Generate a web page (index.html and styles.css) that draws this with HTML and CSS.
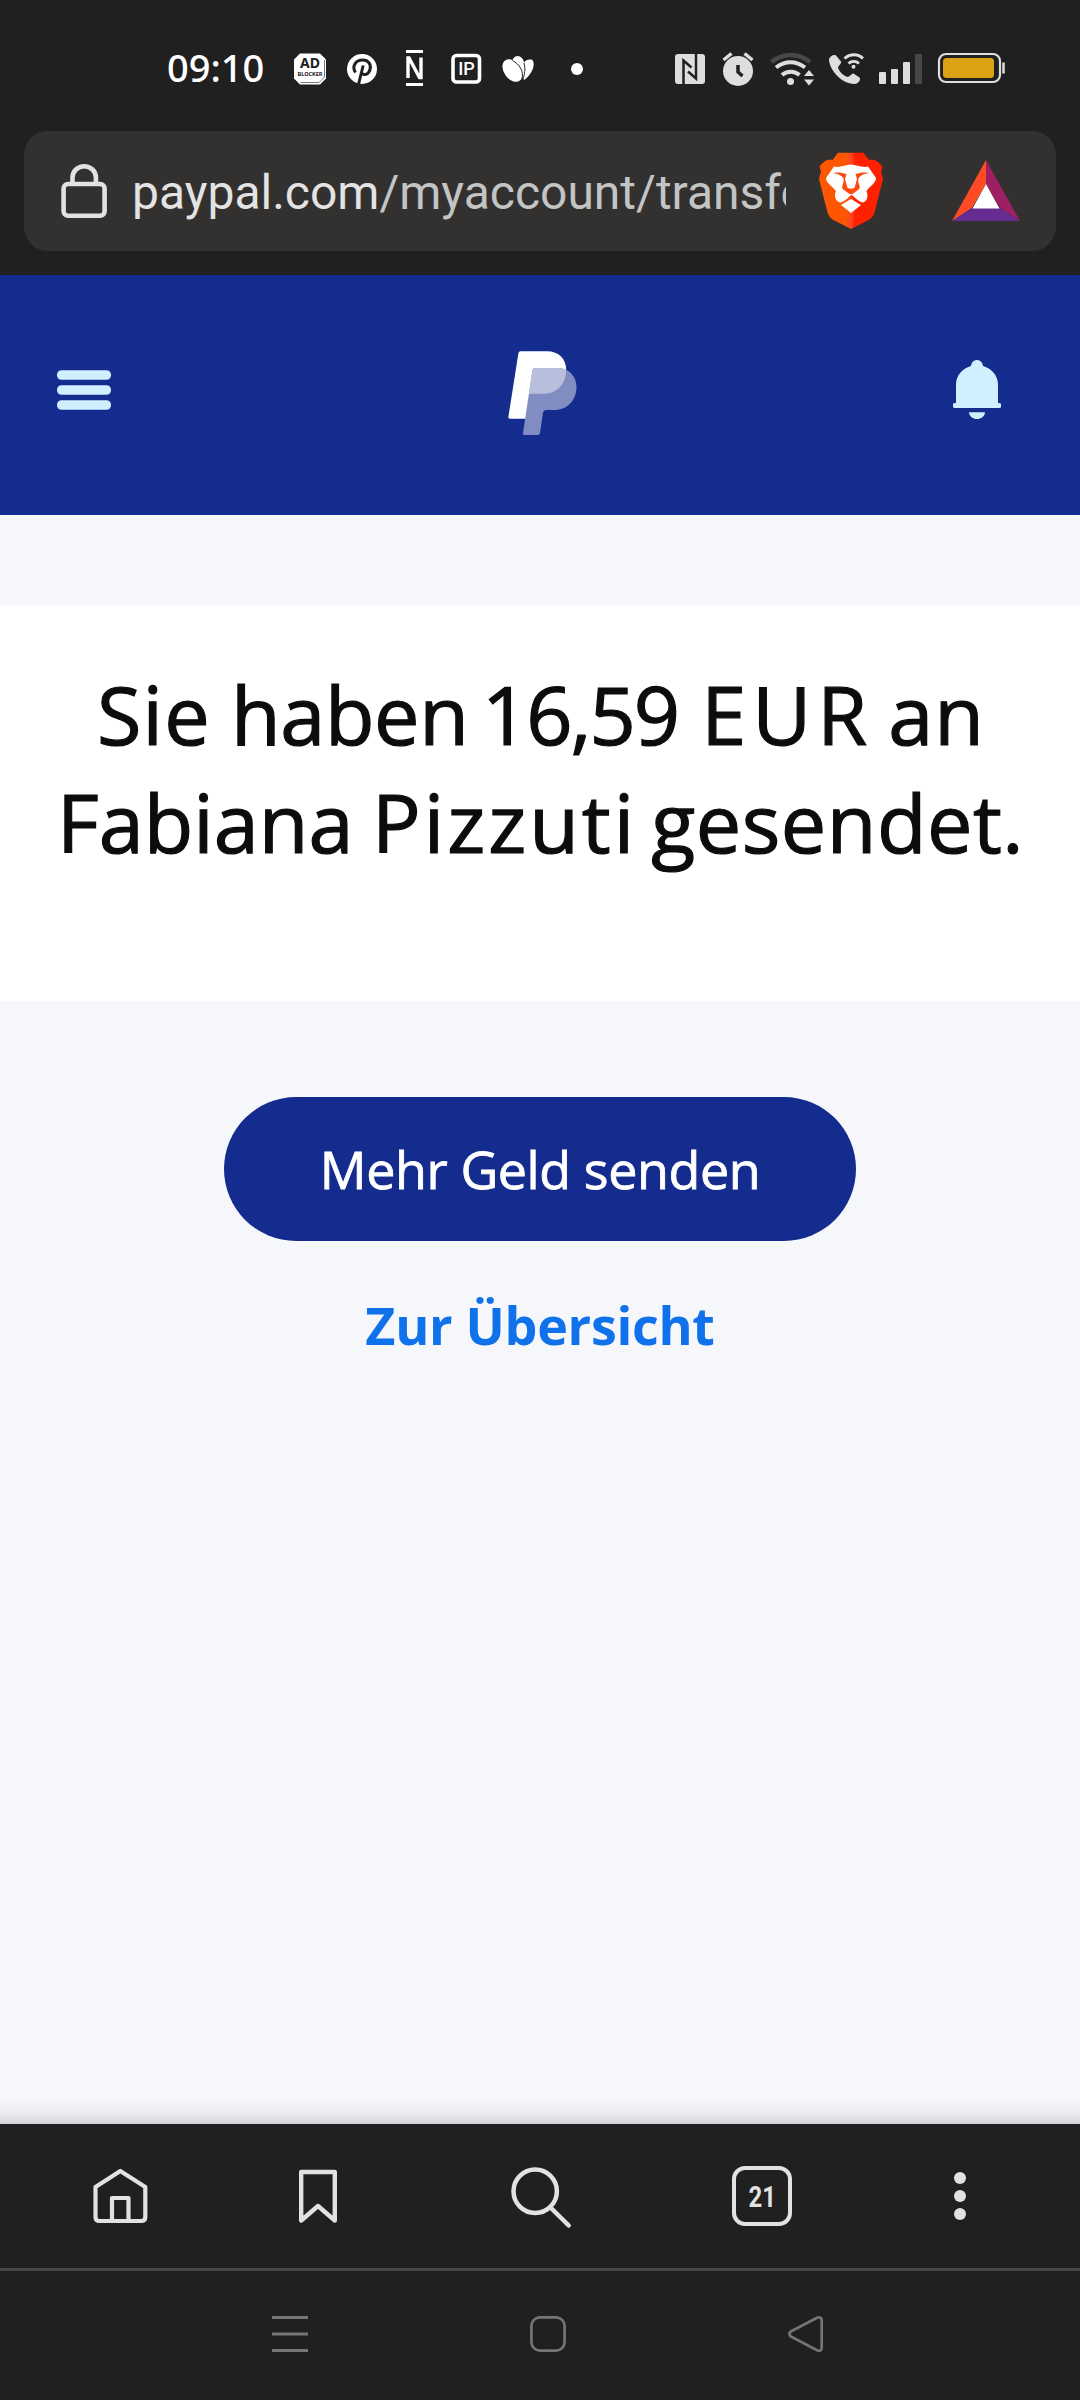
FILE: index.html
```html
<!DOCTYPE html>
<html lang="de">
<head>
<meta charset="utf-8">
<title>PayPal</title>
<link rel="stylesheet" href="styles.css">
</head>
<body>
<div class="screen">
  <div class="status">
    <span class="clock">09:10</span>
    <div class="status-left">
      <svg width="52" height="50" viewBox="284 44 52 50"><path d="M300 53.500h20l6 6v19l-6 6h-20l-6-6v-19z" fill="#fff"/><path d="M300.500 82.500h18.500l5.500-5.500V60" fill="none" stroke="#202020" stroke-width=".6"/><text x="310" y="68" class="ad-big">AD</text><text x="310" y="75.500" class="ad-small" textLength="25" lengthAdjust="spacingAndGlyphs">BLOCKER</text></svg>
      <svg width="52" height="50" viewBox="336 44 52 50"><circle cx="362" cy="69" r="15" fill="#fff"/><path d="M355.500 72.500c-4-6 0-12.500 7-12.500 6 0 9 4.500 7.500 9.500-1.500 5.500-7 6.500-8.500 3M363.200 65.500l-5 20" fill="none" stroke="#202020" stroke-width="3"/></svg>
      <svg width="52" height="50" viewBox="388 44 52 50"><path d="M406 50h17v3h-17zM406 83h17v3h-17z" fill="#fff"/><path d="M408 78V58h1l10.500 19.500h1.500V57.500" fill="none" stroke="#fff" stroke-width="3.400"/></svg>
      <svg width="52" height="50" viewBox="440 44 52 50"><rect x="453" y="55.500" width="26.500" height="26.500" rx="3.500" fill="none" stroke="#fff" stroke-width="3.600"/><text x="466.500" y="75" class="ip">IP</text></svg>
      <svg width="52" height="50" viewBox="492 44 52 50" fill="#fff"><path d="M512.500 60c1-2.500 3-4 5-4 3.500 0 6 3 6.500 6.500 2-2.500 4.500-3.500 8.500-2.500 3.500 5-1 15-8.500 20z"/><ellipse cx="512.500" cy="70.500" rx="8.500" ry="12.500" transform="rotate(-36 512.500 70.500)"/><path d="M512.500 60.500c7 4 11.500 10 9.500 19M524 63c1.500 6 1 11-1.500 17" fill="none" stroke="#202020" stroke-width="1"/></svg>
      <i class="dot"></i>
    </div>
    <div class="status-right">
      <svg width="48" height="50" viewBox="666 44 48 50"><rect x="675" y="54" width="30" height="30" rx="3" fill="#dedede"/><path d="M683.500 84V60.500l8 7M696 54v24.500l-8-7" fill="none" stroke="#202020" stroke-width="2.500"/></svg>
      <svg width="48" height="50" viewBox="714 44 48 50"><circle cx="738" cy="71" r="15" fill="#dedede"/><path d="M723.500 60l8-6.500M752.500 60l-8-6.500" stroke="#dedede" stroke-width="3.500"/><path d="M738 65v7l4.500 4" fill="none" stroke="#202020" stroke-width="3.500"/></svg>
      <svg width="60" height="50" viewBox="762 44 60 50" fill="none" stroke="#dedede" stroke-width="4"><path d="M771.500 62c11-9.500 27.500-9.500 38.500 0" stroke="#484848" stroke-width="4.500"/><path d="M776 67.500c9-7 20-7 29 0M782 75c5-4.500 12.500-4.500 17.500 0"/><circle cx="790.500" cy="81.500" r="3.500" fill="#dedede" stroke="none"/><path d="M804 76l5-6 5 6zM804 79.500l5 6 5-6z" fill="#dedede" stroke="none"/></svg>
      <svg width="48" height="50" viewBox="822 44 48 50"><path d="M829 59c1-3 5-5 7-3.500l5 6c.8 1.800-2.500 4-3 6 1.500 4.500 5 8 9.500 9.500 2 0 3.500-3 6-3.500l6 4c1.500 2-.5 6-5 6.500C841 84 829 69 829 59z" fill="#dedede"/><path d="M844.500 58.500c5.500-5 13.500-5 18.500 0M848.500 63.500c3-2.800 7.500-2.800 10.500 0" fill="none" stroke="#dedede" stroke-width="2.800"/><circle cx="853.500" cy="66.800" r="2" fill="#dedede"/></svg>
      <svg width="60" height="50" viewBox="870 44 60 50" fill="#dedede"><rect x="879" y="72" width="7" height="12" rx="1"/><rect x="891" y="69" width="7" height="15" rx="1"/><rect x="903" y="62" width="7" height="22" rx="1"/><rect x="915" y="54" width="7" height="30" rx="1" fill="#484848"/></svg>
      <svg width="80" height="50" viewBox="930 44 80 50"><rect x="939" y="54" width="61" height="28" rx="7" fill="none" stroke="#dedede" stroke-width="2.200"/><rect x="943" y="58" width="51" height="20" rx="3.500" fill="#dba213"/><path d="M1003.500 62.500v11" stroke="#dedede" stroke-width="2.500"/></svg>
    </div>
  </div>

  <div class="urlbar">
    <svg width="54" height="64" viewBox="57 159 54 64" fill="none" stroke="#e2e2e2" stroke-width="4.600"><rect x="63.600" y="184" width="41" height="31.700" rx="4.500"/><path d="M72.500 184v-6.500a11.700 11.300 0 0 1 23.400 0v6.500"/></svg>
    <div class="url">paypal.com<span class="path">/myaccount/transfer</span></div>
    <svg class="brave" width="66" height="78" viewBox="818 152 66 78">
      <defs><linearGradient id="mane"><stop offset=".42" stop-color="#ff5601"/><stop offset=".5" stop-color="#ff4524"/><stop offset=".57" stop-color="#ff2000"/></linearGradient></defs>
      <path d="M838 152.700h25.500l5.500 7.300c5-1 8 0 13.500 6.500l-1.500 5 2 7.500-8.500 33.500c-1 3-2.500 5-5 7L851 229l-18.500-9.500c-2.500-2-4-4-5-7l-8.500-33.500 2-7.500-1.500-5c5-6.500 8.500-7.500 13-6.500z" fill="url(#mane)"/>
      <path d="M834 166.500c6 1.500 11-1.500 17-2 6 .5 11 3.500 17 2l8 11.500c0 5-6 8-9.500 13 2 5 1 10-3.500 11.500-4-.5-7-4-11.500-8-4 4-7.500 7.500-11.500 8-4.500-1.500-6.500-6.500-4-11.500-4-5-10-8-10-13zM851 199l10 6-10 8-10-8z" fill="#fff"/>
      <path d="M833.500 173c5-1 9 0 13 1l-1.500 5 2.500 9 3.500.7 3.500-.7 2.500-9-1.500-5c4-1 8-2 13-1-4 1-8 2-10 5.500-1.500 5 4 9-.5 11.500l-5.500 4h-3l-5.500-4c-4.500-2.500 1-7-.5-11.500-2-3.500-6-4.500-10-5.500z" fill="#ff4810"/>
    </svg>
    <svg class="bat" width="68" height="62" viewBox="952 160 68 62"><path d="M986 160v24l-14 24-20 13z" fill="#ff4a26"/><path d="M986 160l34 61-20-13-14-24z" fill="#9e1f63"/><path d="M952 221l20-13h28l20 13z" fill="#662d91"/><path d="M986 184l13.500 24.500h-27z" fill="#fff"/></svg>
  </div>

  <header class="header">
    <svg width="54" height="40" viewBox="57 370 54 40" fill="#d1f0ff"><rect x="57" y="370.200" width="54" height="9.600" rx="4.500"/><rect x="57" y="385.200" width="54" height="9.600" rx="4.500"/><rect x="57" y="400.200" width="54" height="9.600" rx="4.500"/></svg>
    <svg class="logo" width="70" height="86" viewBox="508 350 70 86"><path d="M520.500 351.200H547c12 0 19.200 8 19.200 18.500 0 14-9 24-23 24h-13l-4 25h-16.200q-2 0-1.600-2l10-63.500q.3-2 2.100-2z" fill="#fff"/><clipPath id="lower"><path d="M535 368h22c12 0 19.500 8 19.500 19 0 13.500-9.500 23-22 23h-8.500q-2.500 0-3 2.500l-3 20.500q-.4 2-2.400 2h-13q-2 0-1.600-2l9.500-63q.5-2 2.500-2z"/></clipPath><g clip-path="url(#lower)"><path d="M508 350h70v86h-70z" fill="#818cc1"/><path d="M521 351.200h26c12 0 19.200 8 19.200 18.500 0 14-9 24-23 24h-22z" fill="#b8bfdc"/></g></svg>
    <svg width="48" height="60" viewBox="953 360 48 60" fill="#d1f0ff"><path d="M971 366c1-8 11-8 12 0 9 2.500 15 10 15 18.500V403h1a2.300 2.300 0 0 1 0 5h-44a2.300 2.300 0 0 1 0-5h1v-18.500c0-8.500 6-16 15-18.500zM969 412.300h16c-.5 9-15.500 9-16 0z"/></svg>
  </header>

  <main class="page">
    <section class="message">
      <h1>
        <span class="line first"><span class="sie">Sie</span> <span class="haben">haben</span> <span class="amount">16,59</span> <span class="currency">EUR</span> <span class="an">an</span></span>
        <span class="line second">Fabiana <span class="surname">Pizzuti</span> <span class="sent">gesendet.</span></span>
      </h1>
    </section>
    <a class="button">Mehr Geld senden</a>
    <a class="link">Zur Übersicht</a>
  </main>

  <nav class="toolbar">
    <svg width="60" height="60" viewBox="90 2166 60 60" fill="none" stroke="#e2e2e2" stroke-width="4.200" stroke-linejoin="round"><path d="M95.500 2187l24.800-16 25 16v30q0 4-4 4h-41.800q-4 0-4-4z"/><path d="M112 2220v-22h16.500v22"/></svg>
    <svg width="60" height="60" viewBox="288 2166 60 60" fill="none" stroke="#e2e2e2" stroke-width="4.400" stroke-linejoin="round"><path d="M301.200 2172h33.600v48.500L318 2206l-16.800 14.500z"/></svg>
    <svg width="76" height="70" viewBox="502 2161 76 70" fill="none" stroke="#e2e2e2" stroke-width="4.500" stroke-linecap="round"><circle cx="535.200" cy="2191.300" r="21.700"/><path d="M551.500 2208.500l17.200 17"/></svg>
    <div class="tabs"><span>21</span></div>
    <svg width="20" height="60" viewBox="950 2166 20 60" fill="#e2e2e2"><circle cx="960" cy="2178" r="6"/><circle cx="960" cy="2196" r="6"/><circle cx="960" cy="2214" r="6"/></svg>
  </nav>
  <nav class="system">
    <svg width="40" height="40" viewBox="270 2314 40 40" stroke="#757575" stroke-width="3"><path d="M272 2317.500h36M272 2334h36M272 2350.500h36"/></svg>
    <svg width="40" height="40" viewBox="528 2314 40 40" fill="none" stroke="#757575" stroke-width="2.700"><rect x="531.400" y="2317.400" width="33.200" height="33.200" rx="8.500"/></svg>
    <svg width="40" height="40" viewBox="786 2314 40 40" fill="none" stroke="#757575" stroke-width="2.700"><path d="M790.700 2331.500L817 2317.700q4.700-1.500 4.700 3v26.600q0 4.500-4.700 3L790.700 2336.500q-2.500-2.500 0-5z"/></svg>
  </nav>
</div>
</body>
</html>
```
FILE: styles.css
```css
* { box-sizing: border-box; }
body { margin: 0; background: #202020; }
.screen { width: 1080px; height: 2400px; display: flex; flex-direction: column; overflow: hidden; background: #202020; }
svg { display: block; flex: none; }

.status { height: 131px; padding: 44px 70px 0 167px; display: flex; align-items: flex-start; }
.clock { width: 117px; font: 500 38px/47px "Noto Sans", sans-serif; color: #fff; }
.status-left, .status-right { display: flex; align-items: center; }
.status-right { margin-left: auto; }
.dot { width: 12px; height: 12px; margin: 0 27px; border-radius: 50%; background: #fff; }
.ad-big { font: 700 14px "Noto Sans", sans-serif; text-anchor: middle; fill: #202020; }
.ad-small { font: 700 6px "Noto Sans", sans-serif; text-anchor: middle; fill: #202020; }
.ip { font: 500 18px Roboto, sans-serif; text-anchor: middle; fill: #fff; }

.urlbar { flex: none; height: 120px; margin: 0 24px 24px; padding: 0 36px 0 33px; display: flex; align-items: center; border-radius: 24px; background: #32312f; }
.url { width: 654px; margin-left: 21px; padding-top: 4px; overflow: hidden; white-space: nowrap; font: 400 48px/60px Roboto, sans-serif; color: #e3e3e3; }
.url .path { color: #c3c4c4; }
.brave { margin-left: 32px; }
.bat { margin-left: auto; }

.header { flex: none; height: 240px; padding: 0 79px 10px 57px; display: flex; align-items: center; justify-content: space-between; background: #142c8e; }
.logo { margin: 6px 0 0 22px; }

.page { flex: 1; min-height: 0; display: flex; flex-direction: column; align-items: center; padding-top: 90px; color: #0c0c0c; background: linear-gradient(to top, #ced1d5 0, #e3e4e7 6px, #eeeff3 13px, #f5f7fb 26px); }
.message { width: 100%; height: 396px; padding-top: 55px; background: #fff; }
.message h1 { margin: 0; font: 400 81px/108px "Open Sans", sans-serif; white-space: nowrap; -webkit-text-stroke: 1.2px #0c0c0c; }
.line { display: block; }
.first { padding-left: 97px; }
.second { padding-left: 57px; }
.sie { letter-spacing: 1.2px; }
.haben { margin-left: -1px; letter-spacing: -.4px; }
.amount { margin-left: -7.500px; letter-spacing: -2px; }
.currency { margin-left: 2px; letter-spacing: 6px; }
.an { margin-left: -6px; letter-spacing: 1px; }
.surname { margin-left: -2.500px; letter-spacing: 3px; }
.sent { margin-left: -7px; letter-spacing: .5px; }
.button { width: 632px; height: 144px; margin-top: 96px; display: flex; align-items: center; justify-content: center; border-radius: 72px; background: #142c8e; color: #fff; font: 400 52px/72px "Open Sans", sans-serif; letter-spacing: -.4px; -webkit-text-stroke: .8px #fff; }
.link { margin-top: 48px; color: #1072eb; font: 700 52px/72px "Open Sans", sans-serif; letter-spacing: -.3px; }

.toolbar { flex: none; height: 147px; padding: 0 21px; display: grid; grid-template-columns: 198px 198px 246px 198px 198px; align-items: center; justify-items: center; border-bottom: 3px solid #484848; }
.tabs { width: 60px; height: 60px; display: flex; align-items: center; justify-content: center; border: 4.500px solid #e2e2e2; border-radius: 13px; color: #e2e2e2; font: 700 30px/34px Roboto, sans-serif; }
.tabs span { padding-top: 2px; transform: scaleX(.8); }
.system { flex: none; height: 129px; padding: 43px 0 0 161px; display: grid; grid-template-columns: repeat(3, 258px); justify-items: center; align-items: start; }
```
